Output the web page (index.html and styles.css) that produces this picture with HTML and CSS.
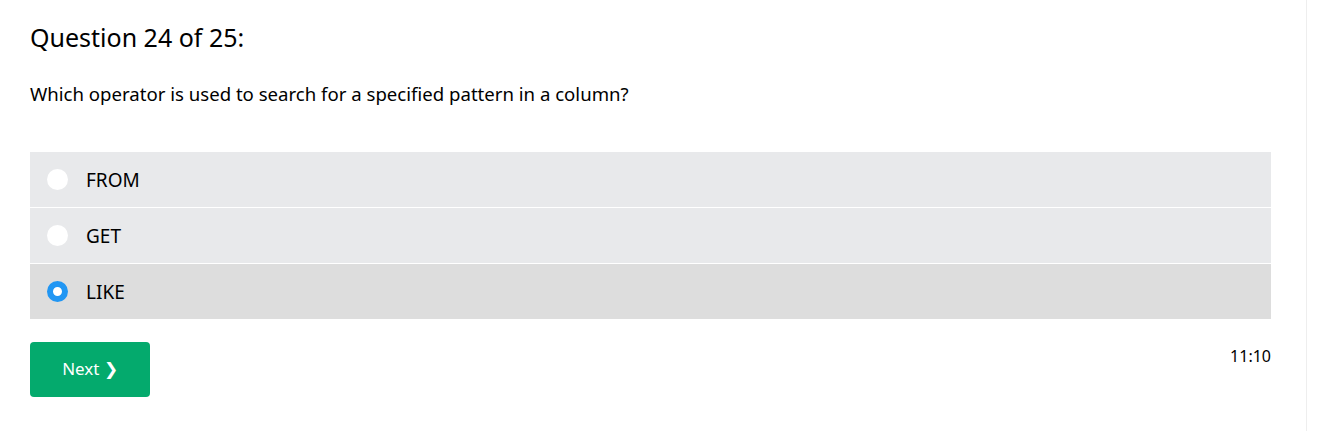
FILE: index.html
```html
<!DOCTYPE html>
<html>
<head>
<meta charset="utf-8">
<link rel="stylesheet" href="styles.css">
</head>
<body>
<div class="page">
  <main class="quiz">
    <h2 class="title">Question 24 of 25:</h2>
    <p class="question">Which operator is used to search for a specified pattern in a column?</p>
    <div class="options">
      <label class="option"><span class="radio"></span><span class="label">FROM</span></label>
      <label class="option"><span class="radio"></span><span class="label">GET</span></label>
      <label class="option selected"><span class="radio checked"></span><span class="label">LIKE</span></label>
    </div>
    <div class="footer">
      <button class="next">Next &#10095;</button>
      <span class="timer">11:10</span>
    </div>
  </main>
</div>
</body>
</html>
```
FILE: styles.css
```css
html, body {
  margin: 0;
  padding: 0;
  background: #fff;
}
body {
  font-family: "Segoe UI", "Noto Sans", "Open Sans", sans-serif;
  color: #000;
}
.page {
  display: flex;
  height: 431px;
}
.quiz {
  width: 1241px;
  padding: 0 35px 0 30px;
  border-right: 1px solid #eeeeee;
}
.title {
  font-size: 25px;
  font-weight: 400;
  margin: 19px 0 0 0;
  line-height: 36px;
}
.question {
  font-size: 18.6px;
  margin: 25px 0 0 0;
  line-height: 27px;
}
.options {
  margin-top: 45px;
  display: flex;
  flex-direction: column;
  gap: 1px;
}
.option {
  display: flex;
  align-items: center;
  height: 55px;
  background: #e8e9eb;
  padding-left: 17px;
  font-size: 19px;
}
.option.selected {
  background: #dddddd;
}
.radio {
  width: 21px;
  height: 21px;
  border-radius: 50%;
  background: #fff;
  box-sizing: border-box;
  margin-right: 18px;
}
.radio.checked {
  background: #fff;
  border: 6px solid #2196f3;
}
.footer {
  display: flex;
  justify-content: space-between;
  align-items: flex-start;
  margin-top: 23px;
}
.next {
  width: 120px;
  height: 55px;
  padding: 0 0 2px 0;
  background: #04aa6d;
  color: #fff;
  border: none;
  border-radius: 4px;
  font-family: inherit;
  font-size: 17px;
}
.timer {
  font-size: 16px;
  margin-top: 2px;
  line-height: 24px;
}
```
